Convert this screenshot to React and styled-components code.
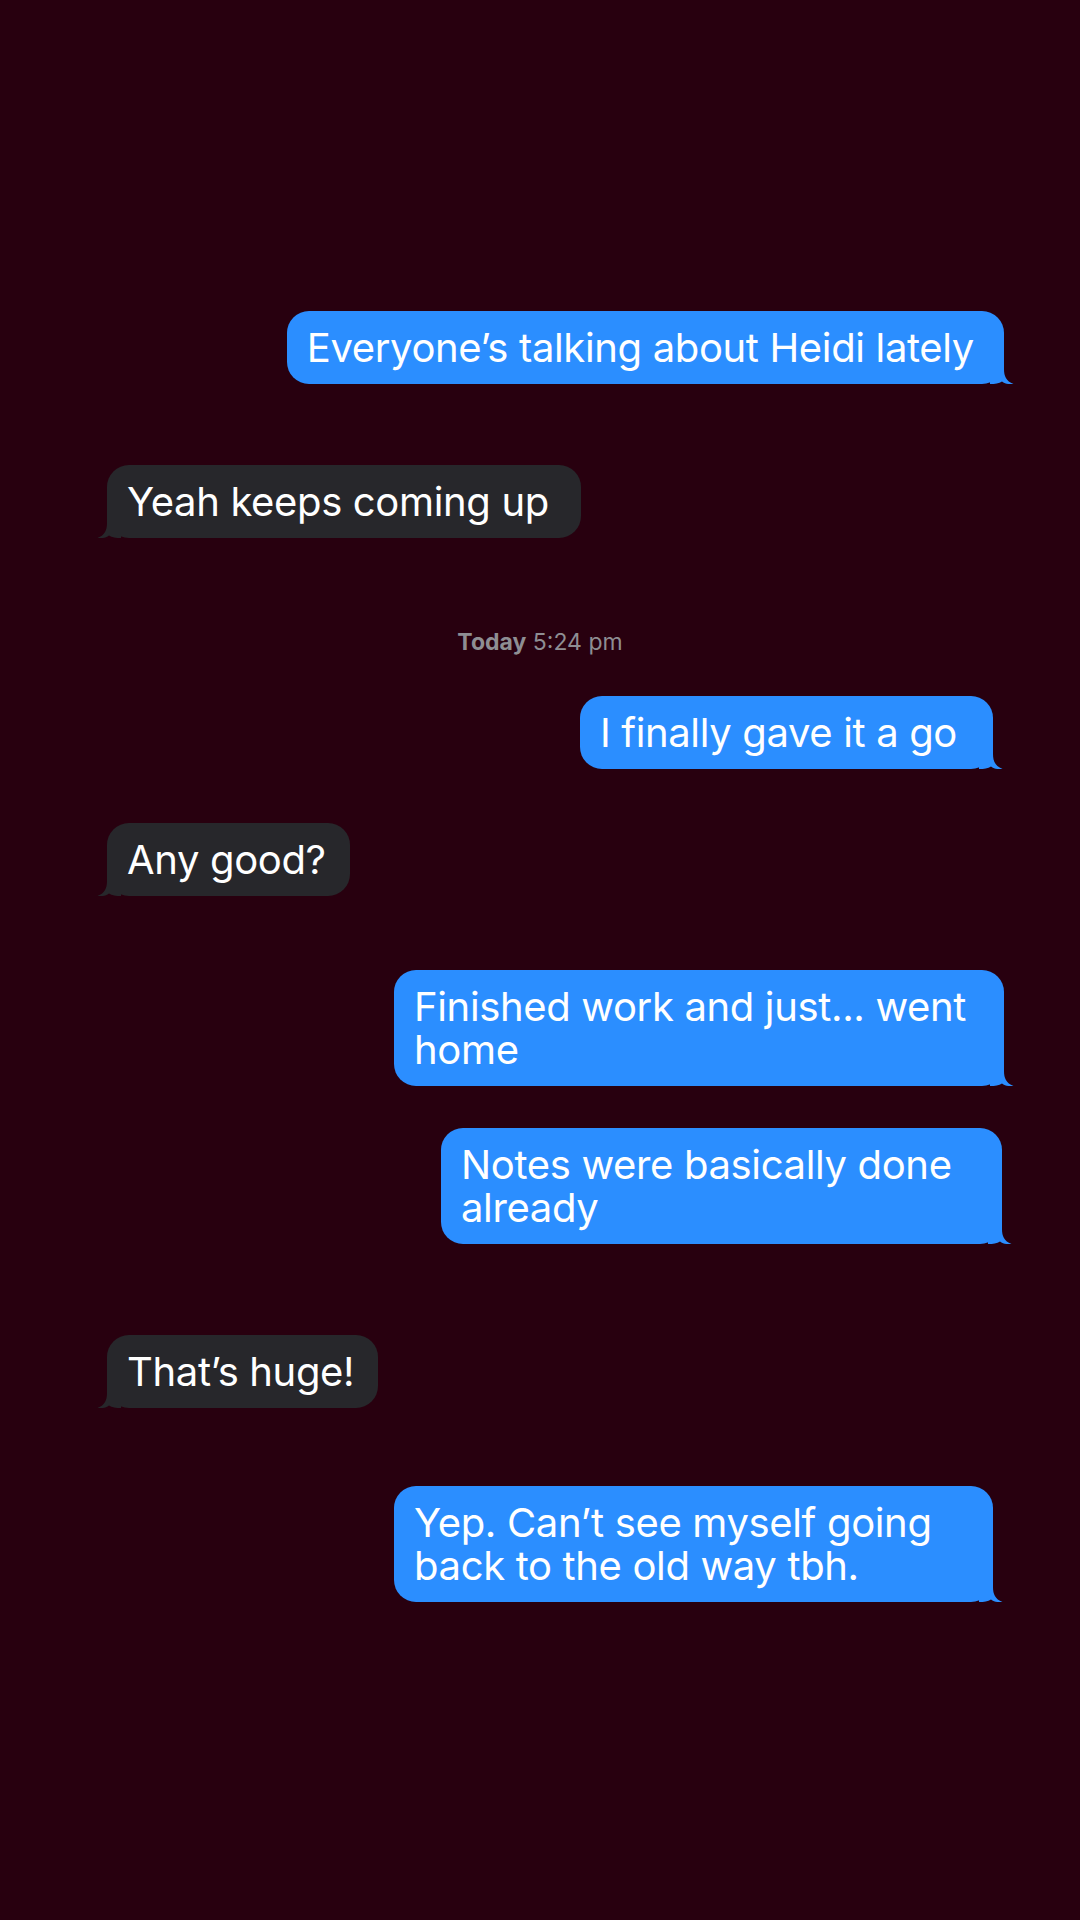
import React from "react";
import styled, { createGlobalStyle } from "styled-components";

const Global = createGlobalStyle`
  html, body { margin: 0; padding: 0; background: #28000f; }
  body { font-family: Inter, "Noto Sans", sans-serif; -webkit-font-smoothing: antialiased; }
`;

const Thread = styled.main`
  min-height: 1920px;
  box-sizing: border-box;
  padding-top: 311px;
  display: flex;
  flex-direction: column;
`;

const Row = styled.div`
  display: flex;
  justify-content: ${(p) => (p.$out ? "flex-end" : "flex-start")};
  margin-top: ${(p) => p.$gap || 0}px;
  padding: ${(p) => (p.$out ? `0 ${p.$inset}px 0 120px` : `0 300px 0 107px`)};
`;

const Bubble = styled.div`
  position: relative;
  box-sizing: border-box;
  max-width: ${(p) => (p.$max ? `${p.$max}px` : "none")};
  padding: 15px ${(p) => p.$padR || 24}px 15px 20px;
  border-radius: 22px;
  background: ${(p) => (p.$out ? "#2b8eff" : "#27272b")};
  color: #ffffff;
  font-size: 40px;
  line-height: 43px;
  letter-spacing: -0.35px;
`;

const TailSvg = styled.svg`
  position: absolute;
  bottom: 0;
  width: 24px;
  height: 24px;
  ${(p) => (p.$out ? "right: -10px;" : "left: -10px; transform: scaleX(-1);")}
`;

const Stamp = styled.div`
  margin-top: ${(p) => p.$gap}px;
  text-align: center;
  font-size: 23px;
  line-height: 28px;
  color: #8e8e93;
  b { font-weight: 700; }
`;

const Tail = ({ out }) => (
  <TailSvg $out={out} viewBox="0 0 24 24">
    <path
      d="M0 0 H14 V9 C14 16 16 21 23.5 24 C19 24.6 15 23.6 12 21.4 C9 23.3 5 24 0 24 Z"
      fill={out ? "#2b8eff" : "#27272b"}
    />
  </TailSvg>
);

const Msg = ({ out, gap, inset, max, padR, children }) => (
  <Row $out={out} $gap={gap} $inset={inset}>
    <Bubble $out={out} $max={max} $padR={padR}>
      {children}
      <Tail out={out} />
    </Bubble>
  </Row>
);

export default function App() {
  return (
    <>
      <Global />
      <Thread>
        <Msg out inset={76} padR={30}>Everyone’s talking about Heidi lately</Msg>
        <Msg gap={81} padR={32}>Yeah keeps coming up</Msg>
        <Stamp $gap={90}>
          <b>Today</b> 5:24 pm
        </Stamp>
        <Msg out gap={40} inset={87} padR={36}>I finally gave it a go</Msg>
        <Msg gap={54}>Any good?</Msg>
        <Msg out gap={74} inset={76} max={610}>Finished work and just... went home</Msg>
        <Msg out gap={42} inset={78} max={561}>Notes were basically done already</Msg>
        <Msg gap={91}>That’s huge!</Msg>
        <Msg out gap={78} inset={87} max={599}>Yep. Can’t see myself going back to the old way tbh.</Msg>
      </Thread>
    </>
  );
}
